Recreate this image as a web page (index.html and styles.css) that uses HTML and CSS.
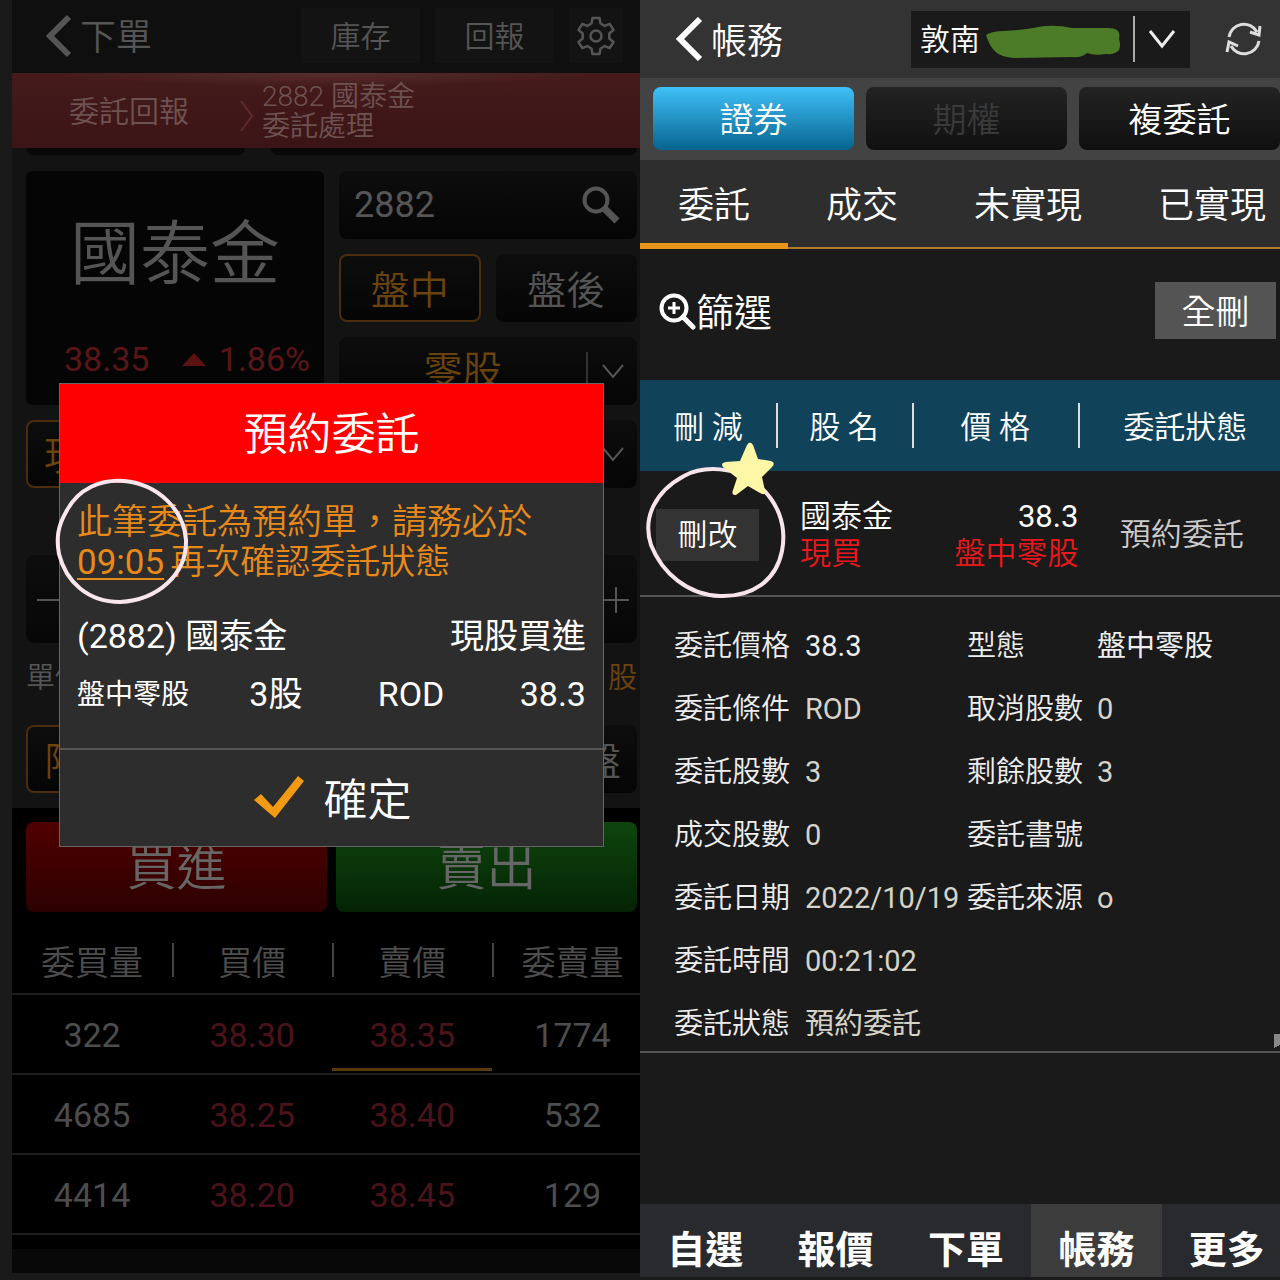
FILE: index.html
```html
<!DOCTYPE html>
<html lang="zh-Hant">
<head>
    <meta charset="utf-8">
    <title>預約委託</title>
    <link rel="stylesheet" href="styles.css">
</head>
<body>
    <main class="screen order">
        <header class="order-header">
            <button class="back">
                <svg width="26" height="42" viewBox="0 0 26 42"><path d="M23 2 L4 21 L23 40" fill="none" stroke="currentColor" stroke-width="6"/></svg>
                下單
            </button>
            <button class="header-button">庫存</button>
            <button class="header-button">回報</button>
            <button class="gear" aria-label="設定">
                <svg width="40" height="40" viewBox="0 0 40 40" fill="none" stroke="currentColor" stroke-width="2.5" stroke-linejoin="round">
                    <path d="M16.500 2h7l1 5.500 4 2.300 5.200-2 3.800 6.200-4.200 3.500v5l4.200 3.500-3.800 6.200-5.200-2-4 2.300-1 5.500h-7l-1-5.500-4-2.300-5.200 2-3.800-6.200 4.200-3.500v-5l-4.200-3.500 3.800-6.200 5.200 2 4-2.300z"/>
                    <circle cx="20" cy="20" r="5.500"/>
                </svg>
            </button>
        </header>

        <div class="notice">
            <span class="notice-title">委託回報</span>
            <svg width="16" height="34" viewBox="0 0 16 34"><path d="M2 2 L13 17 L2 32" fill="none" stroke="#5f2b2b" stroke-width="2"/></svg>
            <p>2882 國泰金<br>委託處理</p>
        </div>

        <div class="order-form">
            <div class="tucked"><span></span><span></span></div>

            <div class="stock-grid">
                <div class="stock-card">
                    <h1>國泰金</h1>
                    <p><span>38.35</span><svg width="24" height="14" viewBox="0 0 24 14"><path d="M0 14 L12 1 L24 14z" fill="#5a1212"/></svg><span>1.86%</span></p>
                </div>
                <div class="field search">
                    <input type="text" value="2882" aria-label="股票代號">
                    <svg width="40" height="40" viewBox="0 0 40 40" fill="none" stroke="currentColor"><circle cx="15" cy="15" r="11.500" stroke-width="4"/><path d="M24 24 L36 36" stroke-width="7"/></svg>
                </div>
                <div class="pair">
                    <button class="field active">盤中</button>
                    <button class="field">盤後</button>
                </div>
                <div class="field picker">
                    <select aria-label="交易單位"><option>零股</option></select>
                    <svg width="24" height="16" viewBox="0 0 24 16"><path d="M2 2 L12 14 L22 2" fill="none" stroke="currentColor" stroke-width="2"/></svg>
                </div>
                <button class="field active start">現股</button>
                <div class="field picker">
                    <select aria-label="委託條件"><option>ROD</option></select>
                    <svg width="24" height="16" viewBox="0 0 24 16"><path d="M2 2 L12 14 L22 2" fill="none" stroke="currentColor" stroke-width="2"/></svg>
                </div>
            </div>

            <div class="stepper">
                <button aria-label="減少"><svg width="26" height="26" viewBox="0 0 26 26"><path d="M0 13h26" stroke="currentColor" stroke-width="2"/></svg></button>
                <button aria-label="增加"><svg width="26" height="26" viewBox="0 0 26 26"><path d="M0 13h26M13 0v26" stroke="currentColor" stroke-width="2"/></svg></button>
            </div>
            <div class="units"><span>單價</span><span class="amber">股</span></div>
            <div class="price-types">
                <button class="field active start">限價</button>
                <button class="field end">收盤</button>
            </div>
        </div>

        <div class="quotes">
            <div class="trade">
                <button class="buy">買進</button>
                <button class="sell">賣出</button>
            </div>
            <table class="depth">
                <thead>
                    <tr><th>委買量</th><th>買價</th><th>賣價</th><th>委賣量</th></tr>
                </thead>
                <tbody>
                    <tr><td>322</td><td class="up">38.30</td><td class="up last">38.35</td><td>1774</td></tr>
                    <tr><td>4685</td><td class="up">38.25</td><td class="up">38.40</td><td>532</td></tr>
                    <tr><td>4414</td><td class="up">38.20</td><td class="up">38.45</td><td>129</td></tr>
                </tbody>
            </table>
        </div>
        <div class="order-foot"></div>

        <div class="dialog" role="dialog" aria-labelledby="dialog-title">
            <h2 id="dialog-title">預約委託</h2>
            <div class="dialog-body">
                <p class="warning">此筆委託為預約單，請務必於<br><u>09:05</u>再次確認委託狀態</p>
                <div class="dialog-row"><span>(2882) 國泰金</span><span>現股買進</span></div>
                <div class="dialog-row"><span class="small">盤中零股</span><span>3股</span><span>ROD</span><span>38.3</span></div>
            </div>
            <button class="confirm">
                <svg width="54" height="46" viewBox="0 0 54 46"><path d="M2 26 L9 20 L21 33 L46 2 L52 7 L23 44z" fill="#f39a14"/></svg>
                確定
            </button>
            <svg class="mark-time" width="136" height="128" viewBox="0 0 136 128" fill="none" stroke="#fbe6ee" stroke-width="4"><path d="M12 34 C24 10 48 1 70 3 C104 6 130 32 132 62 C133 96 104 122 66 124 C34 124 12 104 5 76 C2 60 4 48 12 34z"/></svg>
        </div>
    </main>

    <main class="screen account">
        <header class="account-header">
            <button class="back">
                <svg width="28" height="44" viewBox="0 0 28 44"><path d="M25 2 L5 22 L25 42" fill="none" stroke="currentColor" stroke-width="6"/></svg>
                帳務
            </button>
            <div class="branch">
                <select aria-label="帳號"><option>敦南</option></select>
                <svg class="scribble" width="138" height="36" viewBox="0 0 138 36"><path d="M2 11 Q8 7 20 7 Q42 6 54 3 Q70 0 88 4 L124 4 Q138 4 135 15 Q137 21 135 26 Q131 31 122 30 Q110 32 103 29 Q98 34 88 33 L30 34 Q18 33 13 29 Q6 24 2 11z" fill="#4d7c28"/></svg>
                <svg class="caret" width="28" height="20" viewBox="0 0 28 20"><path d="M2 2 L14 17 L26 2" fill="none" stroke="#eee" stroke-width="3"/></svg>
            </div>
            <button class="refresh" aria-label="重新整理">
                <svg width="38" height="38" viewBox="0 0 38 38" fill="none" stroke="#ddd" stroke-width="3"><path d="M4 17 A15 15 0 0 1 32 12 M35 6 L34 15 L25 12 M34 21 A15 15 0 0 1 6 26 M2 32 L4 22 L13 26"/></svg>
            </button>
        </header>

        <div class="markets">
            <button class="selected">證券</button>
            <button disabled>期權</button>
            <button>複委託</button>
        </div>

        <nav class="tabs">
            <a href="#" class="current">委託</a>
            <a href="#">成交</a>
            <a href="#">未實現</a>
            <a href="#">已實現</a>
        </nav>

        <div class="filter-bar">
            <button class="filter">
                <svg width="38" height="38" viewBox="0 0 38 38" fill="none" stroke="currentColor"><circle cx="16" cy="16" r="12.500" stroke-width="4"/><path d="M16 10v12M10 16h12" stroke-width="3"/><path d="M25 25 L35 35" stroke-width="5" stroke-linecap="round"/></svg>
                篩選
            </button>
            <button class="delete-all">全刪</button>
        </div>

        <table class="orders">
            <thead>
                <tr><th>刪 減</th><th>股 名</th><th>價 格</th><th>委託狀態</th></tr>
            </thead>
            <tbody>
                <tr>
                    <td class="edit-cell">
                        <button>刪改</button>
                        <svg class="mark-edit" width="144" height="162" viewBox="0 0 144 162">
                            <path d="M40 37 C60 26 92 28 112 44 C134 62 143 86 138 112 C132 142 108 158 76 157 C44 156 18 134 7 106 C-2 78 12 52 40 37z" fill="none" stroke="#f8e4ec" stroke-width="4"/>
                            <path d="M103 6 Q106 1 109 6 L114 20 L127 22 Q132 24 128 28 L118 38 L121 52 Q121 57 116 54 L104 47 L92 56 Q87 56 89 51 L93 39 L79 28 Q76 24 82 23 L96 22z" fill="#fff7a8"/>
                        </svg>
                    </td>
                    <td class="name">國泰金<br><span class="red">現買</span></td>
                    <td class="price"><b>38.3</b><br><span class="red">盤中零股</span></td>
                    <td class="status">預約委託</td>
                </tr>
            </tbody>
        </table>

        <dl class="details">
            <dt>委託價格</dt><dd class="bright">38.3</dd><dt>型態</dt><dd class="bright">盤中零股</dd>
            <dt>委託條件</dt><dd>ROD</dd><dt>取消股數</dt><dd>0</dd>
            <dt>委託股數</dt><dd>3</dd><dt>剩餘股數</dt><dd>3</dd>
            <dt>成交股數</dt><dd>0</dd><dt>委託書號</dt><dd></dd>
            <dt>委託日期</dt><dd>2022/10/19</dd><dt>委託來源</dt><dd>o</dd>
            <dt>委託時間</dt><dd class="wide">00:21:02</dd>
            <dt>委託狀態</dt><dd class="wide">預約委託</dd>
        </dl>

        <nav class="bottom-nav">
            <a href="#">自選</a>
            <a href="#">報價</a>
            <a href="#">下單</a>
            <a href="#" class="current">帳務</a>
            <a href="#">更多</a>
        </nav>
    </main>
</body>
</html>
```

FILE: styles.css
```css
* {
    box-sizing: border-box;
}

body {
    display: flex;
    margin: 0;
    background: #1a1a1a;
    font-family: Roboto, "Noto Sans CJK TC", sans-serif;
    font-weight: 350;
}

h1, h2, p, dl, dd {
    margin: 0;
    font-weight: inherit;
}

button, input, select {
    padding: 0;
    border: 0;
    background: none;
    color: inherit;
    font: inherit;
}

button {
    padding-bottom: 3px;
}

select {
    appearance: none;
}

a {
    color: inherit;
    text-decoration: none;
}

svg {
    flex: none;
}

table {
    width: 100%;
    border-collapse: collapse;
    table-layout: fixed;
}

th {
    font-weight: inherit;
}

.screen {
    position: relative;
    display: flex;
    flex: none;
    flex-direction: column;
    width: 50%;
    min-height: 100vh;
    overflow: hidden;
}

.back {
    display: flex;
    align-items: center;
    gap: 8px;
    margin-right: auto;
    font-size: 36px;
}

.back svg,
.filter svg {
    margin-top: 3px;
}

/* order entry, dimmed behind the dialog */

.order {
    padding-left: 12px;
    background: #1a1a1a;
    color: #555;
}

.order-header {
    display: flex;
    align-items: center;
    gap: 15px;
    height: 73px;
    padding: 0 17px 2px 34px;
    background: #0f0f0f;
}

.header-button {
    width: 119px;
    height: 55px;
    background: #131313;
    font-size: 30px;
}

.gear {
    display: grid;
    place-items: center;
    width: 54px;
    height: 55px;
    padding: 0;
    background: #131313;
}

.notice {
    display: flex;
    align-items: center;
    height: 75px;
    padding: 2px 0 0 57px;
    background: radial-gradient(ellipse 42% 14px at 50% 0, #552e2e, transparent), linear-gradient(#451b1b, #3b1416);
    color: #6e5252;
    font-size: 28px;
    line-height: 30px;
}

.notice svg {
    margin: 8px 7px 0 50px;
}

.notice-title {
    font-size: 30px;
}

.order-form {
    padding: 0 3px 15px 14px;
    background: #131313;
}

.tucked {
    display: grid;
    grid-template-columns: 219fr 367fr;
    gap: 26px;
}

.tucked span {
    height: 7px;
    border-radius: 0 0 8px 8px;
    background: #080808;
}

.stock-grid {
    display: grid;
    grid-template-columns: repeat(2, minmax(0, 1fr));
    grid-auto-rows: 68px;
    gap: 15px;
    margin-top: 16px;
}

.stock-card {
    display: flex;
    flex-direction: column;
    justify-content: space-between;
    grid-row: span 3;
    padding: 34px 14px 24px 38px;
    border-radius: 6px;
    background: #050505;
}

.stock-card h1 {
    padding-left: 6px;
    font-size: 70px;
    line-height: 100px;
}

.stock-card p {
    display: flex;
    align-items: center;
    justify-content: space-between;
    color: #5a1518;
    font-size: 34px;
    font-weight: 400;
    line-height: 44px;
}

.stock-card svg {
    margin-left: 20px;
}

.field {
    height: 68px;
    border-radius: 8px;
    background: linear-gradient(#0d0d0d, #050505);
    font-size: 39px;
}

.field.active {
    border: 2px solid #492d0c;
    color: #6b430f;
}

.search {
    display: flex;
    align-items: center;
    padding: 0 16px 0 15px;
}

.search input {
    flex: 1;
    min-width: 0;
    font-size: 36px;
    font-weight: 400;
}

.pair {
    display: grid;
    grid-template-columns: 1fr 1fr;
    gap: 15px;
}

.picker {
    display: flex;
    align-items: center;
    padding-right: 12px;
}

.picker select {
    flex: 1;
    height: 38px;
    margin-right: 13px;
    border-right: 2px solid #333;
    color: #6b430f;
    line-height: 38px;
    text-align: center;
    text-align-last: center;
}

.start {
    padding-left: 16px;
    text-align: left;
}

.end {
    padding-right: 16px;
    text-align: right;
}

.stepper {
    display: flex;
    justify-content: space-between;
    height: 88px;
    margin-top: 67px;
    padding: 0 8px 0 11px;
    border-radius: 8px;
    background: linear-gradient(#0d0d0d, #070707);
}

.stepper button {
    padding: 5px 0 0;
}

.units {
    display: flex;
    justify-content: space-between;
    margin: 15px 0;
    font-size: 29px;
    line-height: 40px;
}

.amber {
    color: #6b430f;
}

.price-types {
    display: grid;
    grid-template-columns: 1fr 1fr;
    gap: 15px;
    padding-top: 12px;
}

.quotes {
    padding-top: 14px;
    padding-bottom: 14px;
    background: #000;
}

.trade {
    display: grid;
    grid-template-columns: 1fr 1fr;
    gap: 9px;
    padding: 0 3px 0 14px;
}

.trade button {
    height: 90px;
    padding-bottom: 8px;
    border-radius: 8px;
    color: #666;
    font-size: 50px;
}

.buy {
    background: linear-gradient(#500000, #2c0000);
}

.sell {
    background: linear-gradient(#0e450e, #042304);
}

.depth {
    width: 102%;
    margin-top: 15px;
    color: #4d4d4d;
    font-size: 34px;
    text-align: center;
}

.depth tr {
    height: 80px;
    border-bottom: 2px solid #1d1d1d;
}

.depth thead tr {
    height: 67px;
}

.depth th,
.depth td {
    padding: 0;
}

.depth td {
    padding-top: 2px;
    font-weight: 400;
}

.depth th + th {
    background: linear-gradient(#444, #444) 0 50% / 2px 34px no-repeat;
}

.depth .up {
    color: #4c1219;
}

.depth .last {
    background: linear-gradient(#5a3a0c, #5a3a0c) 0 calc(100% - 2px) / 100% 3px no-repeat;
}

.order-foot {
    height: 24px;
    background: #080808;
}

/* dialog */

.dialog {
    position: absolute;
    top: 383px;
    right: 36px;
    left: 59px;
    border: 1px solid #666;
    background: #2d2d2d;
    color: #fff;
}

.dialog h2 {
    padding-top: 3px;
    background: #f00;
    font-size: 44px;
    line-height: 96px;
    text-align: center;
}

.dialog-body {
    padding: 20px 17px 27px;
    font-size: 34px;
}

.warning {
    margin-bottom: 27px;
    color: #e8891c;
    font-size: 35px;
    line-height: 40px;
}

.warning u {
    margin-right: 6px;
    font-weight: 400;
    text-decoration-thickness: 2px;
    text-underline-offset: 4px;
}

.dialog-row {
    display: flex;
    align-items: center;
    justify-content: space-between;
    font-weight: 400;
    line-height: 53px;
}

.dialog-row + .dialog-row {
    margin-top: 5px;
}

.small {
    font-size: 28px;
}

.dialog-row .small {
    margin-right: -15px;
}

.confirm {
    display: flex;
    align-items: center;
    justify-content: center;
    gap: 18px;
    width: 100%;
    height: 98px;
    border-top: 2px solid #555;
    font-size: 44px;
}

.mark-time {
    position: absolute;
    top: 94px;
    left: -6px;
}

/* account */

.account {
    background: #1a1a1a;
    color: #fff;
}

.account-header {
    display: flex;
    align-items: center;
    height: 78px;
    padding: 0 17px 0 35px;
    background: #333;
}

.branch {
    position: relative;
    display: flex;
    align-items: center;
    width: 279px;
    height: 57px;
    margin-right: 35px;
    padding: 0 14px 0 9px;
    background: #1a1a1a;
    font-size: 30px;
}

.branch select {
    flex: 1;
    height: 46px;
    margin-right: 13px;
    border-right: 2px solid #aaa;
}

.scribble {
    position: absolute;
    top: 13px;
    left: 73px;
}

.refresh {
    display: flex;
    padding: 0;
}

.markets {
    display: grid;
    grid-template-columns: repeat(3, 1fr);
    gap: 12px;
    padding: 9px 0 10px 13px;
    background: #434343;
}

.markets button {
    height: 63px;
    border-radius: 8px;
    background: linear-gradient(#232323, #101010);
    font-size: 34px;
}

.markets .selected {
    background: linear-gradient(#3fc0f8, #07648f);
}

.markets button:disabled {
    color: #3a3a3a;
}

.tabs {
    display: flex;
    height: 89px;
    border-bottom: 2px solid #b47a2c;
    background: #2e2e2e;
    font-size: 36px;
    line-height: 93px;
}

.tabs a {
    flex: none;
    padding: 0 38px;
}

.tabs .current {
    height: 89px;
    border-bottom: 6px solid #e8941a;
}

.filter-bar {
    display: flex;
    align-items: center;
    justify-content: space-between;
    height: 131px;
    padding: 0 4px 8px 18px;
}

.filter {
    display: flex;
    align-items: center;
    font-size: 38px;
}

.delete-all {
    width: 121px;
    height: 57px;
    background: #545454;
    font-size: 34px;
}

.orders {
    font-size: 31px;
    line-height: 37px;
}

.orders th {
    height: 91px;
    padding: 3px 0 0;
    background: #10435a;
}

.orders th + th {
    background: linear-gradient(#ddd, #ddd) 0 50% / 2px 45px no-repeat #10435a;
}

.orders th:nth-child(1),
.orders th:nth-child(2) {
    width: 21.25%;
}

.orders th:nth-child(3) {
    width: 26%;
}

.orders th:last-child {
    padding-left: 12px;
}

.orders td {
    height: 125px;
    padding: 3px 0 0;
    border-bottom: 2px solid #555;
}

.orders .edit-cell {
    position: relative;
    padding-left: 16px;
}

.edit-cell button {
    width: 103px;
    height: 52px;
    padding: 0;
    background: #333;
    font-size: 30px;
}

.mark-edit {
    position: absolute;
    top: -32px;
    left: 4px;
}

.orders .name {
    padding-left: 24px;
}

.orders .price {
    text-align: right;
}

.price b {
    font-weight: 400;
}

.orders .status {
    padding-left: 5px;
    color: #ccc;
    text-align: center;
}

.red {
    color: #e8181c;
}

.details {
    display: grid;
    grid-template-columns: 131px 162px 130px 1fr;
    grid-auto-rows: 43px;
    align-items: baseline;
    row-gap: 20px;
    padding: 28px 0 5px 34px;
    border-bottom: 2px solid #555;
    background: linear-gradient(150deg, #888 70%, transparent 70%) 100% 100% / 6px 17px no-repeat;
    color: #eee;
    font-size: 29px;
    line-height: 43px;
}

.details dd {
    color: #d6d3c8;
    font-weight: 400;
}

.details .bright {
    color: #eee;
}

.details .wide {
    grid-column: span 3;
}

.bottom-nav {
    display: grid;
    grid-template-columns: repeat(5, 1fr);
    margin: auto -12px 3px 0;
    background: #292a2e;
    font-size: 38px;
    font-weight: 700;
    line-height: 53px;
    text-align: center;
}

.bottom-nav a {
    padding-top: 20px;
}

.bottom-nav .current {
    background: #3c3c3c;
}
```
